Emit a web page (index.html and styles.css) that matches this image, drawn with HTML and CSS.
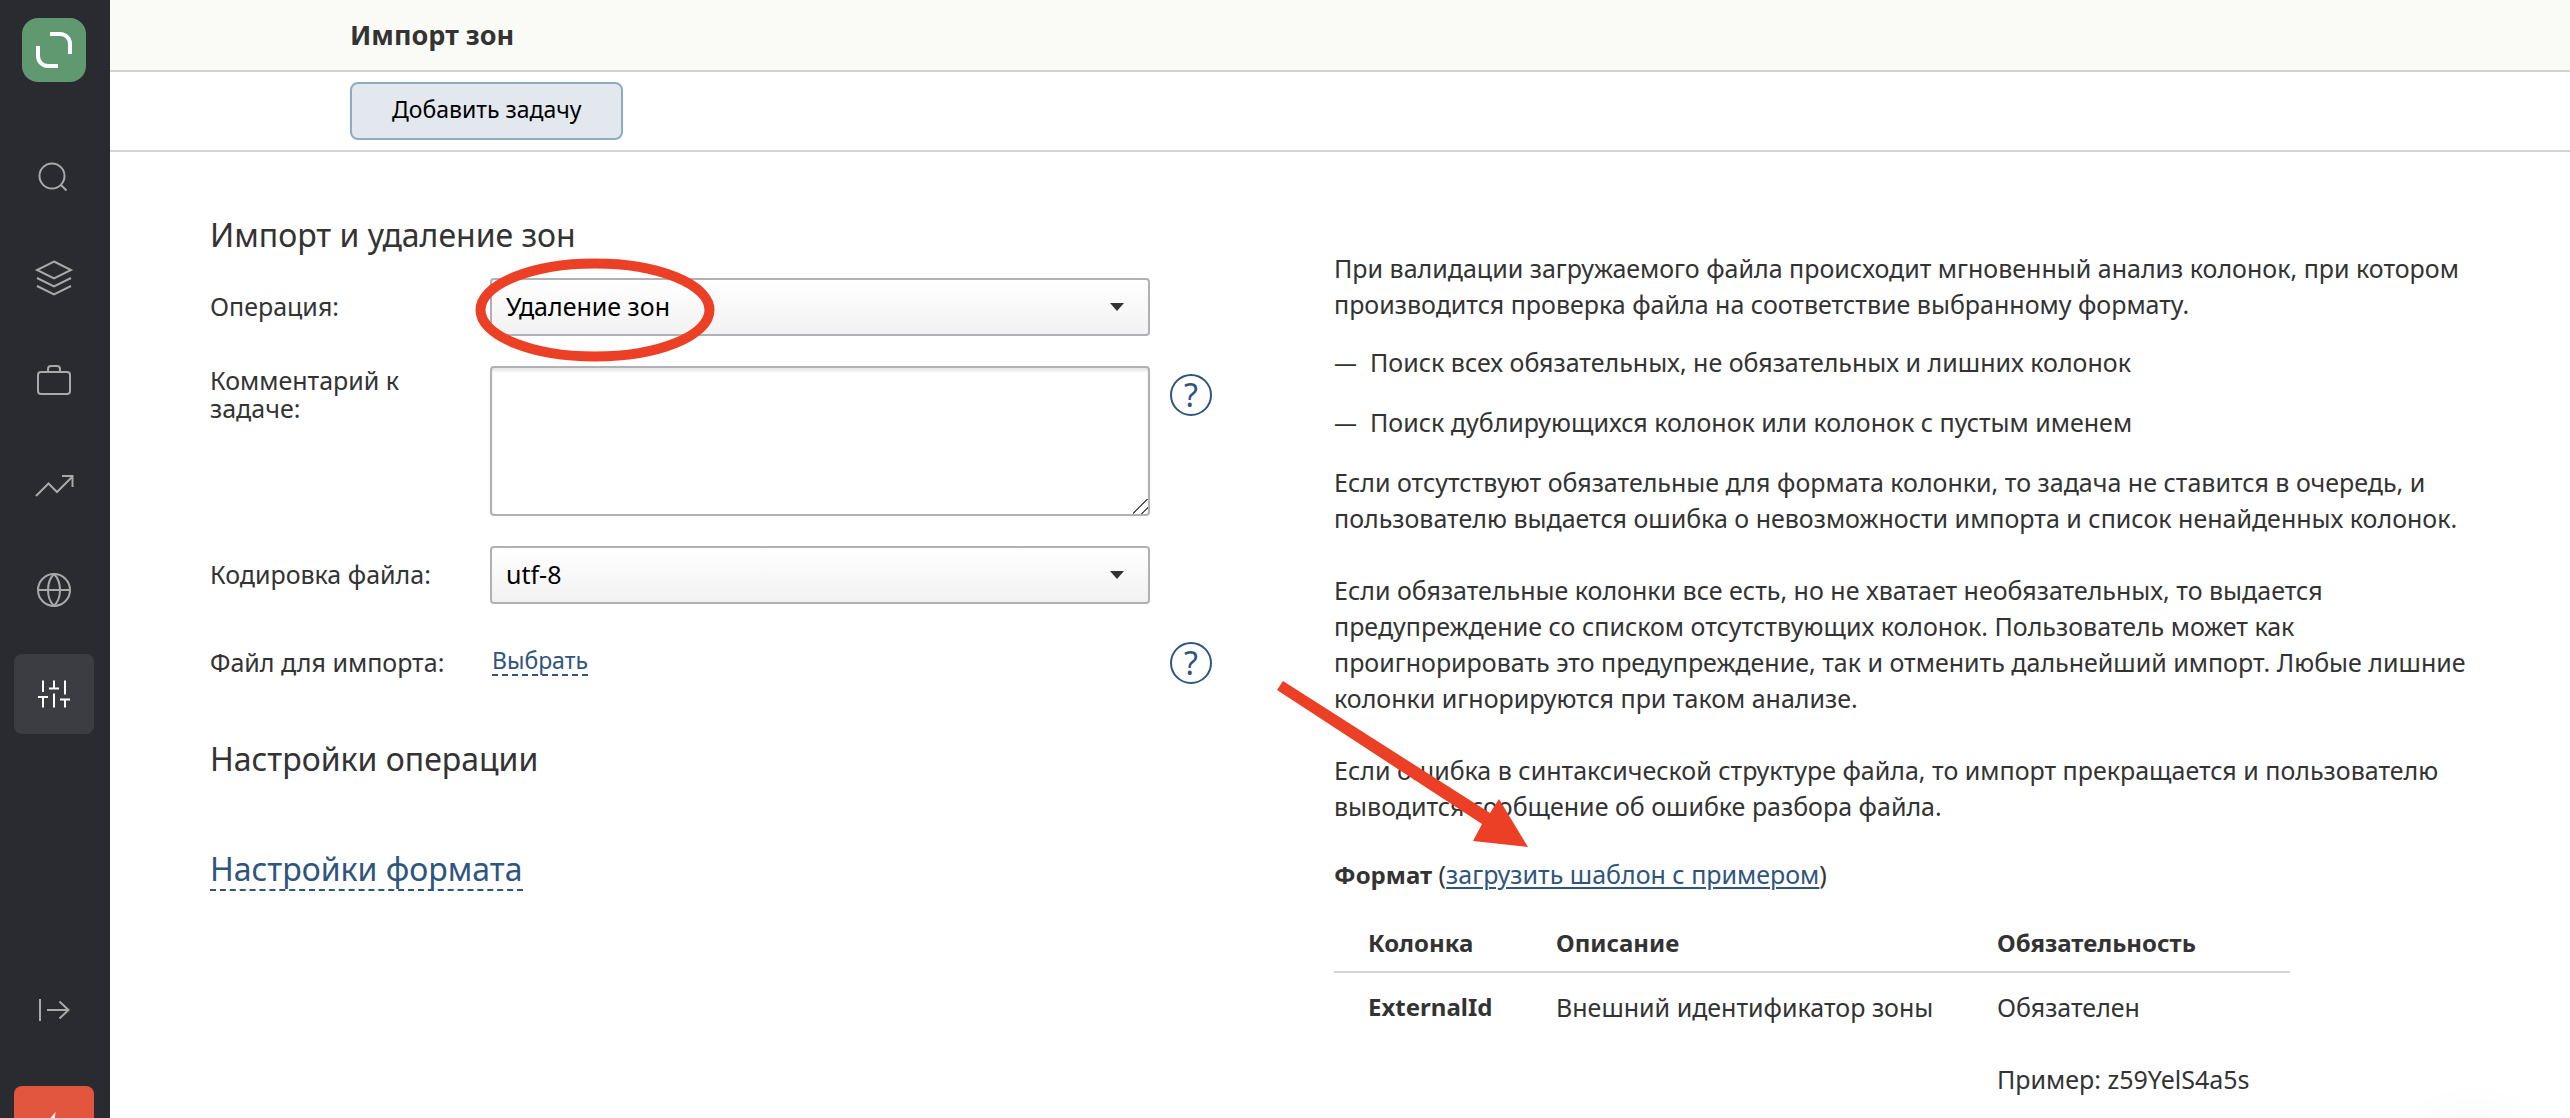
FILE: index.html
```html
<!DOCTYPE html>
<html lang="ru">
<head>
<meta charset="utf-8">
<title>Импорт зон</title>
<meta name="viewport" content="width=device-width, initial-scale=1">
<link rel="stylesheet" href="styles.css">
</head>
<body>
<div class="app">
  <nav class="sidebar" aria-label="Главное меню">
    <a class="logo" href="#" aria-label="Главная">
      <svg viewBox="0 0 64 64"><path d="M28 16h10a10 10 0 0 1 10 10v10M16 28v10a10 10 0 0 0 10 10h10"/></svg>
    </a>
    <div class="menu">
      <a class="item" href="#" aria-label="Поиск"><svg viewBox="0 0 80 80"><circle cx="38" cy="42" r="12.5"/><path d="M47 51l5.500 5.500"/></svg></a>
      <a class="item" href="#" aria-label="Слои"><svg viewBox="0 0 80 80"><path d="M40 23.500l17 8.500-17 8.500L23 32zM23 40l17 8.500L57 40M23 48l17 8.500L57 48"/></svg></a>
      <a class="item" href="#" aria-label="Портфель"><svg viewBox="0 0 80 80"><rect x="24" y="30" width="32" height="22" rx="3"/><path d="M34 30v-3a3 3 0 0 1 3-3h6a3 3 0 0 1 3 3v3"/></svg></a>
      <a class="item" href="#" aria-label="Аналитика"><svg viewBox="0 0 80 80"><path d="M22 50l12.500-12.500 8.500 8.500 15.500-15.500M48 30h10.500v11"/></svg></a>
      <a class="item" href="#" aria-label="Сеть"><svg viewBox="0 0 80 80"><circle cx="40" cy="40" r="16"/><path d="M24 40h32M40 24c-8 8-8 24 0 32M40 24c8 8 8 24 0 32"/></svg></a>
      <a class="item active" href="#" aria-label="Настройки" aria-current="page"><svg viewBox="0 0 80 80"><path d="M29 26.500v11.500M24 43h10M29 43v10.500M40 26.500v8M35 34.500h10M40 39.500v14M51 26.500v14M46 45.500h10M51 45.500v8"/></svg></a>
    </div>
    <div class="menu menu-bottom">
      <a class="item" href="#" aria-label="Развернуть"><svg viewBox="0 0 80 80"><path d="M26 29v22M33 40h21M45.500 31.500L54.500 40l-9 8.500"/></svg></a>
      <a class="item alert" href="#" aria-label="События"><svg viewBox="0 0 80 80"><path d="M41.500 26L28 42h11l-2 14 14-17H40z"/></svg></a>
    </div>
  </nav>

  <main class="page">
    <header class="title-bar"><h1>Импорт зон</h1></header>
    <div class="toolbar"><button class="btn" type="submit" form="import-form">Добавить задачу</button></div>

    <div class="content">
      <form class="form" id="import-form">
        <h2>Импорт и удаление зон</h2>
        <div class="operation row">
          <label for="operation">Операция:</label>
          <div class="select">
            <select id="operation"><option>Удаление зон</option><option>Импорт зон</option></select>
          </div>
          <svg class="mark-ellipse" viewBox="0 0 240 104" aria-hidden="true"><ellipse cx="120" cy="52" rx="114.500" ry="46.500"/></svg>
        </div>
        <div class="row">
          <label class="top" for="comment">Комментарий к задаче:</label>
          <textarea id="comment"></textarea>
          <button class="help" type="button" aria-label="Справка о комментарии">?</button>
        </div>
        <div class="row">
          <label for="encoding">Кодировка файла:</label>
          <div class="select">
            <select id="encoding"><option>utf-8</option></select>
          </div>
        </div>
        <div class="row">
          <span class="label">Файл для импорта:</span>
          <div class="file"><a class="dashed" href="#">Выбрать</a></div>
          <button class="help" type="button" aria-label="Справка о файле">?</button>
        </div>
        <h2 class="section">Настройки операции</h2>
        <h2 class="section"><a class="dashed" href="#">Настройки формата</a></h2>
      </form>

      <section class="info">
        <p>При валидации загружаемого файла происходит мгновенный анализ колонок, при котором<br>производится проверка файла на соответствие выбранному формату.</p>
        <ul>
          <li>Поиск всех обязательных, не обязательных и лишних колонок</li>
          <li>Поиск дублирующихся колонок или колонок с пустым именем</li>
        </ul>
        <p>Если отсутствуют обязательные для формата колонки, то задача не ставится в очередь, и<br>пользователю выдается ошибка о невозможности импорта и список ненайденных колонок.</p>
        <p class="spaced">Если обязательные колонки все есть, но не хватает необязательных, то выдается<br>предупреждение со списком отсутствующих колонок. Пользователь может как<br>проигнорировать это предупреждение, так и отменить дальнейший импорт. Любые лишние<br>колонки игнорируются при таком анализе.</p>
        <p class="spaced">Если ошибка в синтаксической структуре файла, то импорт прекращается и пользователю<br>выводится сообщение об ошибке разбора файла.</p>
        <p class="format"><b>Формат</b> (<a href="#">загрузить шаблон с примером</a>)</p>
        <table>
          <thead><tr><th>Колонка</th><th>Описание</th><th>Обязательность</th></tr></thead>
          <tbody><tr><th>ExternalId</th><td>Внешний идентификатор зоны</td><td>Обязателен<br><br>Пример: z59YelS4a5s</td></tr></tbody>
        </table>
        <svg class="mark-arrow" viewBox="0 0 252 168" aria-hidden="true"><path d="M7 1L214 133 223 119 252 167 197 161 206 144 1 10z"/></svg>
      </section>
    </div>
  </main>
  <div class="chat-shadow"></div>
</div>
</body>
</html>
```
FILE: styles.css
```css
* { box-sizing: border-box; }

body {
  margin: 0;
  background: #fff;
  color: #333;
  font: 25px/36px "Noto Sans", sans-serif;
}

a { color: #2f557d; text-decoration-thickness: 2px; text-underline-offset: 3px; }
h1, h2, p, ul { margin: 0; padding: 0; }
button, select, textarea { font: inherit; margin: 0; }

.app { display: flex; height: 100vh; overflow: hidden; }

/* Sidebar */
.sidebar {
  flex: none;
  display: flex;
  flex-direction: column;
  align-items: center;
  width: 110px;
  padding: 18px 2px 0 0;
  background: #2a2b30;
  overflow: hidden;
}
.sidebar svg { display: block; width: 100%; fill: none; stroke: #a9a9aa; stroke-width: 2; }
.logo { flex: none; width: 64px; height: 64px; border-radius: 16px; background: #60986f; }
.sidebar .logo svg { stroke: #fff; stroke-width: 4; }
.menu { display: flex; flex-direction: column; gap: 24px; margin-top: 52px; }
.menu-bottom { gap: 36px; margin-top: 236px; }
.item { flex: none; width: 80px; height: 80px; border-radius: 8px; }
.item.active { background: #3b3d42; }
.sidebar .active svg { stroke: #fff; }
.item.alert { background: #e2563f; }
.sidebar .alert svg { fill: #fff; stroke: none; }

/* Header */
.page { flex: 1; min-width: 0; }
.title-bar {
  height: 72px;
  padding: 15px 240px;
  background: #fafbf7;
  border-bottom: 2px solid #d3d3d3;
}
h1 { font-size: 27px; line-height: 40px; }
.toolbar { height: 80px; padding: 10px 240px; border-bottom: 2px solid #d3d3d3; }
.btn {
  height: 58px;
  padding: 0 40px 4px;
  border: 2px solid #8eabc4;
  border-radius: 8px;
  background: #e2e8ee;
  color: #000;
  font-size: 23px;
}

/* Content */
.content {
  display: grid;
  grid-template-columns: minmax(0, 1002fr) minmax(0, 1124fr);
  gap: 122px;
  padding: 63px 112px 0 100px;
}
h2 { margin-bottom: 23px; font-size: 32px; line-height: 40px; font-weight: 400; }
.row {
  display: grid;
  grid-template-columns: 280px minmax(0, 1fr) 42px;
  align-items: start;
  margin-bottom: 30px;
  min-height: 58px;
}
label, .label { padding-top: 14px; line-height: 28px; }
label.top { padding: 0 60px 0 0; }
.select { position: relative; }
.select::after {
  content: "";
  position: absolute;
  top: 25px;
  right: 26px;
  border: 7px solid transparent;
  border-top: 8px solid #333;
  border-bottom: 0;
  pointer-events: none;
}
.select, textarea { margin-right: 20px; }
select {
  display: block;
  width: 100%;
  height: 58px;
  padding: 0 14px 2px;
  appearance: none;
  border: 2px solid #b0b0b5;
  border-radius: 4px;
  background: linear-gradient(#fff, #f2f2f2);
  color: #000;
}
textarea {
  display: block;
  height: 150px;
  padding: 10px 14px;
  border: 2px solid #b0b0b5;
  border-radius: 4px;
  background: #fff;
  box-shadow: inset 0 3px 3px #e8e8e8;
}
textarea::-webkit-resizer {
  background: linear-gradient(135deg, transparent 46%, #555 46% 53%, transparent 53% 74%, #555 74% 81%, transparent 81%);
}
.help {
  width: 42px;
  height: 42px;
  margin-top: 8px;
  padding: 0;
  border: 2px solid #2f557d;
  border-radius: 50%;
  background: none;
  color: #2f557d;
  font-size: 32px;
  line-height: 36px;
}
.file { padding: 12px 2px; font-size: 23px; line-height: 28px; }
.dashed { display: inline-block; border-bottom: 2px dashed #2f557d; text-decoration: none; }
.section { margin: 47px 0 70px; }

/* Description */
.info { position: relative; padding-top: 35px; white-space: nowrap; }
ul { list-style: none; padding: 22px 0 24px; }
li { display: flex; gap: 13px; }
li + li { margin-top: 24px; }
li::before { content: "—"; width: 23px; font-size: 23px; }
.spaced { margin-top: 36px; }
.format { margin-top: 32px; }
b, th { font-size: 24px; }
table { margin-top: 32px; width: 956px; border-collapse: collapse; table-layout: fixed; }
th, td { padding: 16px 0 0 34px; text-align: left; vertical-align: top; }
thead th { padding: 0 0 10px 34px; border-bottom: 2px solid #d3d3d3; }
th:nth-child(1) { width: 188px; }
th:nth-child(2) { width: 441px; }

/* Marks drawn over the page */
.operation { position: relative; }
.mark-ellipse {
  position: absolute;
  left: 265px;
  top: -20px;
  width: 240px;
  height: 104px;
  fill: none;
  stroke: #eb3f26;
  stroke-width: 10;
  pointer-events: none;
}
.mark-arrow {
  position: absolute;
  left: -58px;
  top: 465px;
  width: 252px;
  height: 168px;
  fill: #eb3f26;
  pointer-events: none;
}
.chat-shadow {
  position: fixed;
  right: 36px;
  bottom: -130px;
  width: 120px;
  height: 120px;
  border-radius: 50%;
  box-shadow: 0 0 60px #0001;
}
```
